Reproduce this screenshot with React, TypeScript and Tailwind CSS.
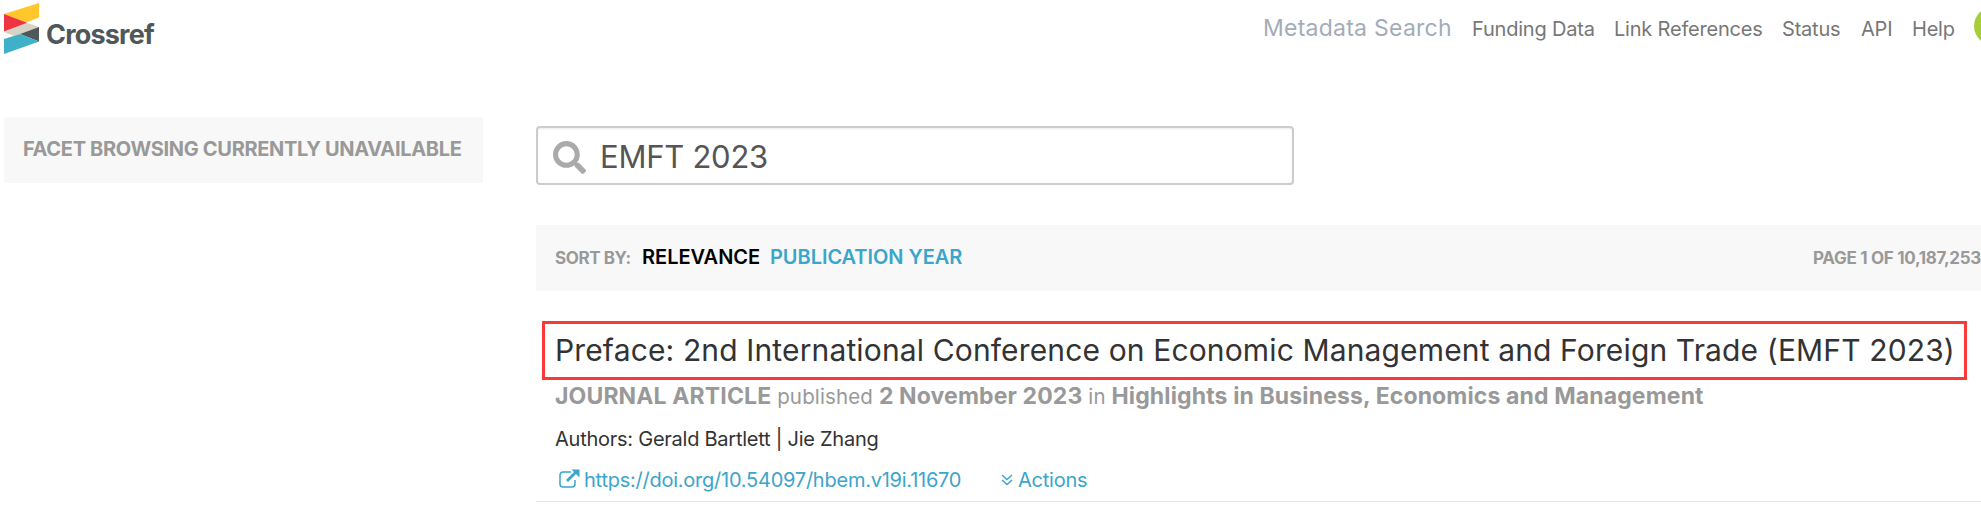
import { FaSearch } from "react-icons/fa";

const navLinks = [
  { label: "Funding Data", width: "w-[122px]" },
  { label: "Link References", width: "w-[148px]" },
  { label: "Status", width: "w-[59px]" },
  { label: "API", width: "w-[31px]" },
  { label: "Help", width: "w-[43px]" },
];

function Logo() {
  return (
    <div className="ml-1 flex h-[60px] w-[170px] items-start">
      <svg viewBox="0 0 35 51" className="mt-[3px] h-[51px] w-[35px] shrink-0">
        <path d="M0 11 35 0v14.500L22 19.500 0 11Z" fill="#ffc72c" />
        <path d="M0 29 22 19.500 35 24 16 31 10 33Z" fill="#d8d2c4" />
        <path d="M0 11 23 19.700 0 28.500Z" fill="#ef3340" />
        <path d="M35 24v14.500L16 31Z" fill="#4f5858" />
        <path d="M0 36 16 31 35 38.500 0 51Z" fill="#3eb1c8" />
      </svg>
      <span className="ml-[7px] mt-[17px] text-[27px] font-bold leading-[36px] tracking-[-0.8px] text-[#4f5858]">
        Crossref
      </span>
    </div>
  );
}

function Header() {
  return (
    <header className="flex h-[117px] w-[2013px] justify-between">
      <Logo />
      <nav className="flex h-[60px] items-baseline gap-[20px] whitespace-nowrap text-[20px] leading-[56px] tracking-[-0.2px] text-[#777]">
        <a className="w-[189px] text-[23px] tracking-[0.25px] text-[#a3acb8]">Metadata Search</a>
        {navLinks.map((link) => (
          <a key={link.label} className={link.width}>
            {link.label}
          </a>
        ))}
        <span className="-ml-px mt-[7px] h-[38px] w-[39px] self-start rounded-full bg-[#a6ce39]" />
      </nav>
    </header>
  );
}

function SearchBox() {
  return (
    <div className="mt-[9px] flex h-[59px] w-[758px] items-center rounded-[4px] border-2 border-[#ccc] pl-[15px] shadow-[inset_0_1px_2px_rgba(0,0,0,0.08)]">
      <FaSearch className="mt-[3px] size-[33px] text-[#aaa]" />
      <span className="ml-[14px] pt-[3px] text-[31px] tracking-[-0.25px] text-[#555]">EMFT 2023</span>
    </div>
  );
}

function SortBar() {
  return (
    <div className="mt-[40px] flex h-[66px] w-[1445px] items-baseline overflow-hidden bg-[#f8f8f8] pl-[19px] font-semibold leading-[64px]">
      <span className="w-[87px] text-[17px] font-bold tracking-[-0.4px] text-[#999]">SORT BY:</span>
      <span className="w-[128px] text-[20px] text-black">RELEVANCE</span>
      <span className="text-[20px] tracking-[-0.05px] text-[#3ba5cb]">PUBLICATION YEAR</span>
      <span className="ml-auto text-[17px] font-bold tracking-[-0.3px] text-[#999]">PAGE 1 OF 10,187,253</span>
    </div>
  );
}

function Result() {
  return (
    <article className="h-[181px] border-b border-[#e5e5e5]">
      <h2 className="ml-[6px] mt-[30px] flex h-[59px] w-[1425px] items-center border-[3px] border-[#fb3838] pl-[10px] text-[30px] tracking-[0.14px] text-[#333]">
        Preface: 2nd International Conference on Economic Management and Foreign Trade (EMFT 2023)
      </h2>
      <div className="pl-[19px]">
        <p className="text-[20.500px] leading-[32px] tracking-[0.13px] text-[#999]">
          <b className="text-[23px]">JOURNAL ARTICLE</b> published <b className="text-[23px]">2 November 2023</b> in{" "}
          <b className="text-[23px]">Highlights in Business, Economics and Management</b>
        </p>
        <p className="mt-[10px] text-[20px] leading-[32px] tracking-[-0.25px] text-[#333]">
          Authors: Gerald Bartlett | Jie Zhang
        </p>
        <div className="mt-[9px] flex h-[32px] items-center text-[20px] leading-[32px] tracking-[-0.24px] text-[#3ba5cb]">
          <svg viewBox="0 0 21 20" className="-mt-[2px] ml-[4px] mr-[4px] h-[20px] w-[21px]" fill="none">
            <path d="M12 3H4a3 3 0 0 0-3 3v9a3 3 0 0 0 3 3h9a3 3 0 0 0 3-3v-4" stroke="currentColor" strokeWidth="1.5" />
            <path d="m8 12 9.500-9.500" stroke="currentColor" strokeWidth="2.8" />
            <path d="M12.500 0.500h8v8Z" fill="currentColor" />
          </svg>
          <a className="w-[417px]">https://doi.org/10.54097/hbem.v19i.11670</a>
          <svg viewBox="0 0 12 12" className="-mt-px mr-[5px] h-[12px] w-[12px]" fill="none" stroke="currentColor" strokeWidth="1.4">
            <path d="m1 1 5 4.500L11 1M1 6l5 4.500L11 6" />
          </svg>
          <a>Actions</a>
        </div>
      </div>
    </article>
  );
}

export default function App() {
  return (
    <div className="h-[507px] w-[1981px] overflow-hidden bg-white font-['Inter',sans-serif]">
      <Header />
      <div className="flex">
        <aside className="ml-1 h-[66px] w-[479px] shrink-0 whitespace-nowrap bg-[#f8f8f8] pl-[19px] text-[20px] font-bold leading-[64px] tracking-[-0.32px] text-[#999]">
          FACET BROWSING CURRENTLY UNAVAILABLE
        </aside>
        <main className="ml-[53px] w-[1480px] shrink-0 whitespace-nowrap">
          <SearchBox />
          <SortBar />
          <Result />
        </main>
      </div>
    </div>
  );
}
